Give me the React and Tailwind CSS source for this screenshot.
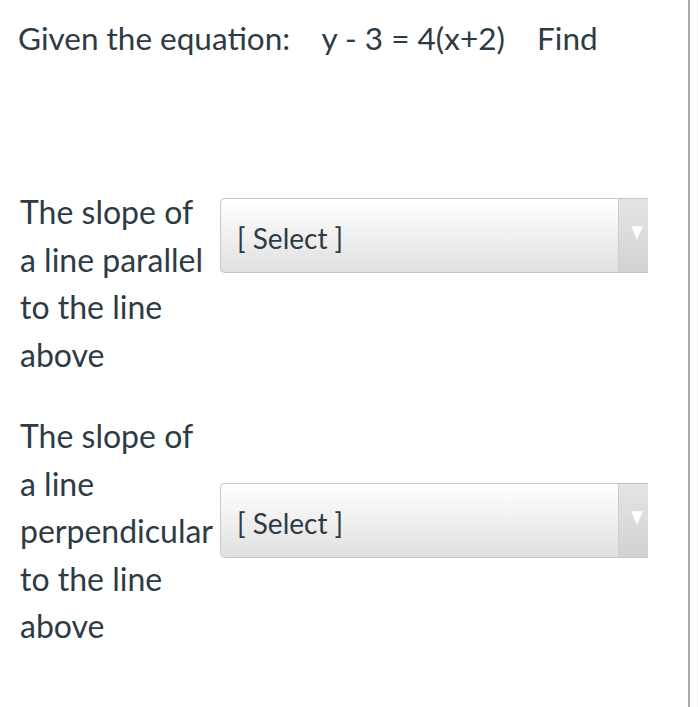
import React from "react";

const SelectBox = ({ className }) => (
  <div
    className={`flex h-[75px] w-[428px] overflow-hidden rounded-l-[5px] border border-r-0 border-[#c4c8cc] bg-gradient-to-b from-[#ffffff] to-[#e0e0e0] ${className}`}
  >
    <div className="flex flex-1 items-center pl-[16px] pt-[4px] text-[28px] text-[#2d3b45]">[ Select ]</div>
    <div className="flex w-[30px] items-start justify-end border-l border-[#cdcdcd] bg-gradient-to-b from-[#e4e4e4] to-[#d2d2d2] pr-[5px] pt-[27px]">
      <svg width="12" height="14" viewBox="0 0 12 14">
        <polygon points="0,0 12,0 6,14" fill="#ffffff" stroke="#e8e8e8" strokeWidth="0.5" />
      </svg>
    </div>
  </div>
);

const rows = [
  { lines: ["The slope of", "a line parallel", "to the line", "above"], offset: "mt-[10px]" },
  { lines: ["The slope of", "a line", "perpendicular", "to the line", "above"], offset: "mt-[71px]" },
];

export default function App() {
  return (
    <div className="flex min-h-[707px] w-[698px] bg-white font-['Lato','Liberation_Sans',sans-serif] text-[#2d3b45]">
      <div className="w-[688px]">
        {/* Question stem */}
        <p className="mt-[14px] pl-[18px] text-[31.5px] leading-[48px] whitespace-pre">
          {"Given the equation:    y - 3 = 4(x+2)    Find"}
        </p>

        <div className="mt-[126px] flex flex-col gap-[34px]">
          {rows.map((row, i) => (
            <div key={i} className="flex items-start">
              <div className="w-[216px] pl-[20px] text-[32px] leading-[47.5px] whitespace-nowrap">
                {row.lines.map((line, j) => (
                  <span key={j} className="block">
                    {line}
                  </span>
                ))}
              </div>
              <SelectBox className={`ml-[4px] ${row.offset}`} />
            </div>
          ))}
        </div>
      </div>
      <div className="w-[2px] bg-[#a9a9a9]" />
      <div className="w-[8px] border-r border-[#f2f2f2]" />
    </div>
  );
}
